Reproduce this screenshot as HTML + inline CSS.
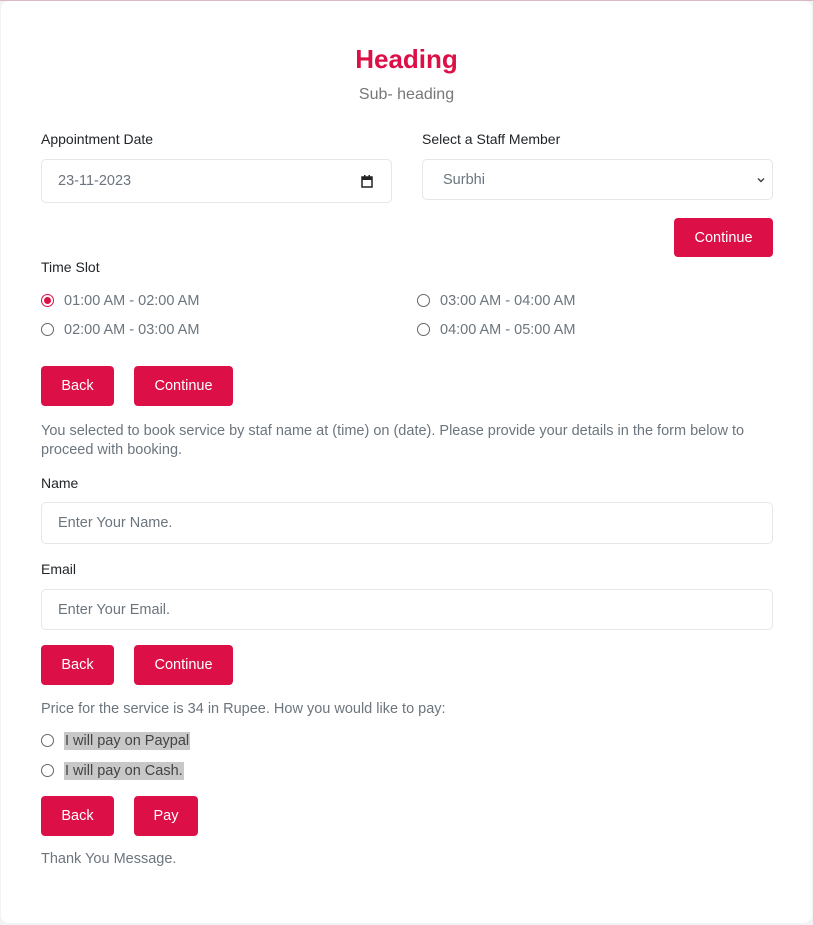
<!DOCTYPE html>
<html><head><style>
*{box-sizing:border-box;margin:0;padding:0}
body{width:813px;height:925px;background:#f3f3f6;font-family:"Liberation Sans",sans-serif;position:relative;overflow:hidden}
.top{position:absolute;left:0;top:0;width:813px;height:1px;background:#d9b9c2}
.card{position:absolute;left:1px;top:1px;width:811px;height:922px;background:#fff;border-radius:8px}
.a{position:absolute;white-space:nowrap}
.lbl{font-size:14px;color:#212529}
.g{font-size:14.5px;color:#6c757d}
.inp{position:absolute;border:1px solid #e6e6e6;border-radius:5px;background:#fff;font-size:14.5px;color:#6c757d;padding-left:16px;display:flex;align-items:center}
.btn{position:absolute;background:#dc0f47;color:#fff;font-size:14.5px;border-radius:4px;display:flex;align-items:center;justify-content:center;height:40px}
.r{position:absolute;width:13px;height:13px;border:1px solid #666;border-radius:50%;background:#fff}
.r.on{border-color:#dc0f47}
.r.on::after{content:"";position:absolute;left:2px;top:2px;width:7px;height:7px;border-radius:50%;background:#dc0f47}
.hl{background:#c8c8c8;color:#444}
</style></head><body>
<div class="top"></div>
<div class="card"></div>
<div class="a" style="left:0;width:813px;text-align:center;top:44px;font-size:26px;font-weight:bold;color:#dc0f47">Heading</div>
<div class="a" style="left:0;width:813px;text-align:center;top:86px;font-size:16px;color:#777">Sub- heading</div>
<div class="a lbl" style="left:41px;top:131px">Appointment Date</div>
<div class="a lbl" style="left:422px;top:131px">Select a Staff Member</div>
<div class="inp" style="left:41px;top:159px;width:351px;height:44px">23-11-2023
<svg style="position:absolute;right:18px;top:15px" width="12" height="13" viewBox="0 0 12 13"><rect x="1" y="2" width="10" height="10" fill="none" stroke="#222" stroke-width="1.5"/><rect x="1" y="2" width="10" height="3" fill="#222"/><rect x="3" y="0" width="1.5" height="3" fill="#222"/><rect x="7.5" y="0" width="1.5" height="3" fill="#222"/></svg></div>
<div class="inp" style="left:422px;top:159px;width:351px;height:41px;padding-left:20px">Surbhi<svg style="position:absolute;right:7px;top:17px" width="8" height="6" viewBox="0 0 8 6"><path d="M1 1.5L4 4.5L7 1.5" fill="none" stroke="#444" stroke-width="1.5"/></svg></div>
<div class="btn" style="left:674px;top:218px;width:99px;height:39px">Continue</div>
<div class="a lbl" style="left:41px;top:259px">Time Slot</div>
<div class="r on" style="left:41px;top:294px"></div><div class="a g" style="left:64px;top:293px">01:00 AM - 02:00 AM</div>
<div class="r" style="left:41px;top:323px"></div><div class="a g" style="left:64px;top:322px">02:00 AM - 03:00 AM</div>
<div class="r" style="left:417px;top:294px"></div><div class="a g" style="left:440px;top:293px">03:00 AM - 04:00 AM</div>
<div class="r" style="left:417px;top:323px"></div><div class="a g" style="left:440px;top:322px">04:00 AM - 05:00 AM</div>
<div class="btn" style="left:41px;top:366px;width:73px">Back</div>
<div class="btn" style="left:134px;top:366px;width:99px">Continue</div>
<div class="a g" style="left:41px;top:422px;line-height:19px;white-space:normal;width:730px">You selected to book service by staf name at (time) on (date). Please provide your details in the form below to proceed with booking.</div>
<div class="a lbl" style="left:41px;top:475px">Name</div>
<div class="inp" style="left:41px;top:502px;width:732px;height:42px">Enter Your Name.</div>
<div class="a lbl" style="left:41px;top:561px">Email</div>
<div class="inp" style="left:41px;top:589px;width:732px;height:41px">Enter Your Email.</div>
<div class="btn" style="left:41px;top:645px;width:73px">Back</div>
<div class="btn" style="left:134px;top:645px;width:99px">Continue</div>
<div class="a g" style="left:41px;top:701px">Price for the service is 34 in Rupee. How you would like to pay:</div>
<div class="r" style="left:41px;top:734px"></div><div class="a g hl" style="left:64px;top:732px;padding:1px 1px">I will pay on Paypal</div>
<div class="r" style="left:41px;top:764px"></div><div class="a g hl" style="left:64px;top:762px;padding:1px 1px">I will pay on Cash.</div>
<div class="btn" style="left:41px;top:796px;width:73px">Back</div>
<div class="btn" style="left:134px;top:796px;width:64px">Pay</div>
<div class="a g" style="left:41px;top:851px">Thank You Message.</div>
</body></html>
